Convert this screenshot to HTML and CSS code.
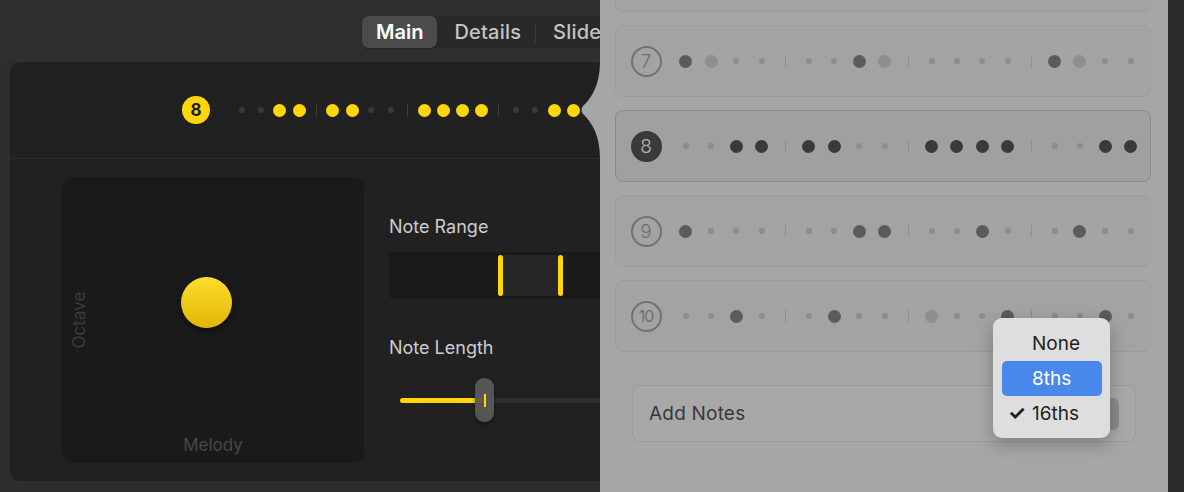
FILE: index.html
```html
<!DOCTYPE html>
<html lang="en">
<head>
    <meta charset="UTF-8">
    <title>Drummer - Main</title>
    <link rel="stylesheet" href="styles.css">
</head>
<body>

<div class="app">
    <!-- Abas do topo -->
    <div class="toolbar">
        <div class="segmented">
            <span class="seg active">Main</span>
            <span class="seg">Details</span>
            <span class="seg-sep"></span>
            <span class="seg">Slider</span>
        </div>
    </div>

    <div class="panel">
        <!-- Padrão selecionado -->
        <div class="pattern-head">
            <span class="badge">8</span>
            <div class="steps steps-head">
                <span class="st"></span><span class="st"></span><span class="st on"></span><span class="st on"></span>
                <span class="sep"></span>
                <span class="st on"></span><span class="st on"></span><span class="st"></span><span class="st"></span>
                <span class="sep"></span>
                <span class="st on"></span><span class="st on"></span><span class="st on"></span><span class="st on"></span>
                <span class="sep"></span>
                <span class="st"></span><span class="st"></span><span class="st on"></span><span class="st on"></span>
            </div>
        </div>

        <div class="panel-body">
            <!-- Pad XY -->
            <div class="xy-pad">
                <span class="axis-y">Octave</span>
                <span class="ball" style="left:119px; top:100px;"></span>
                <span class="axis-x">Melody</span>
            </div>

            <div class="controls">
                <div class="label">Note Range</div>
                <div class="range">
                    <span class="range-out" style="width:109px;"></span>
                    <span class="handle"></span>
                    <span class="range-in" style="width:55px;"></span>
                    <span class="handle"></span>
                    <span class="range-out grow"></span>
                </div>

                <div class="label label-gap">Note Length</div>
                <div class="slider">
                    <span class="fill" style="width:84px;"></span>
                    <span class="track"></span>
                    <span class="thumb" style="left:86px;"><i></i></span>
                </div>
            </div>
        </div>
    </div>
</div>

<!-- Popover com lista de padrões -->
<div class="popover">
    <svg class="arrow" width="20" height="96" viewBox="0 0 20 96">
        <path d="M20 0 C20 22 12 36 3 44 Q0 48 3 52 C12 60 20 74 20 96 Z" fill="#a6a6a6"/>
    </svg>

    <div class="cards">
        <div class="card"></div>

        <div class="card">
            <span class="num">7</span>
            <div class="steps">
                <span class="st on"></span><span class="st on soft"></span><span class="st"></span><span class="st"></span>
                <span class="sep"></span>
                <span class="st"></span><span class="st"></span><span class="st on"></span><span class="st on soft"></span>
                <span class="sep"></span>
                <span class="st"></span><span class="st"></span><span class="st"></span><span class="st"></span>
                <span class="sep"></span>
                <span class="st on"></span><span class="st on soft"></span><span class="st"></span><span class="st"></span>
            </div>
        </div>

        <div class="card current">
            <span class="num">8</span>
            <div class="steps">
                <span class="st"></span><span class="st"></span><span class="st on"></span><span class="st on"></span>
                <span class="sep"></span>
                <span class="st on"></span><span class="st on"></span><span class="st"></span><span class="st"></span>
                <span class="sep"></span>
                <span class="st on"></span><span class="st on"></span><span class="st on"></span><span class="st on"></span>
                <span class="sep"></span>
                <span class="st"></span><span class="st"></span><span class="st on"></span><span class="st on"></span>
            </div>
        </div>

        <div class="card">
            <span class="num">9</span>
            <div class="steps">
                <span class="st on"></span><span class="st"></span><span class="st"></span><span class="st"></span>
                <span class="sep"></span>
                <span class="st"></span><span class="st"></span><span class="st on"></span><span class="st on"></span>
                <span class="sep"></span>
                <span class="st"></span><span class="st"></span><span class="st on"></span><span class="st"></span>
                <span class="sep"></span>
                <span class="st"></span><span class="st on"></span><span class="st"></span><span class="st"></span>
            </div>
        </div>

        <div class="card">
            <span class="num small">10</span>
            <div class="steps">
                <span class="st"></span><span class="st"></span><span class="st on"></span><span class="st"></span>
                <span class="sep"></span>
                <span class="st"></span><span class="st on"></span><span class="st"></span><span class="st"></span>
                <span class="sep"></span>
                <span class="st on soft"></span><span class="st"></span><span class="st"></span><span class="st on"></span>
                <span class="sep"></span>
                <span class="st"></span><span class="st"></span><span class="st on"></span><span class="st"></span>
            </div>
        </div>
    </div>

    <div class="add-notes">
        <span>Add Notes</span>
        <span class="popup-btn"></span>
    </div>

    <!-- Menu aberto -->
    <div class="menu">
        <div class="menu-item">None</div>
        <div class="menu-item selected">8ths</div>
        <div class="menu-item"><span class="check">✓</span>16ths</div>
    </div>
</div>

<div class="edge"></div>

</body>
</html>
```

FILE: styles.css
```css
body {
    margin: 0;
    width: 1184px;
    height: 492px;
    overflow: hidden;
    position: relative;
    background-color: #2d2d2d;
    font-family: Inter, "Noto Sans", sans-serif;
}
.app {
    width: 1184px;
}
.toolbar {
    height: 62px;
    box-sizing: border-box;
    padding: 16px 0 0 362px;
    background-color: #2f2f2f;
}
.segmented {
    display: flex;
    align-items: center;
    width: max-content;
    height: 32px;
    background-color: #292929;
    border-radius: 8px;
}
.seg {
    height: 32px;
    line-height: 32px;
    padding: 0 14px 0 17px;
    font-size: 20px;
    letter-spacing: 0.2px;
    font-weight: 500;
    color: #c4c4c4;
    border-radius: 7px;
}
.seg.active {
    padding: 0 14px;
    background-color: #4b4b4b;
    color: #fff;
    font-weight: 600;
    letter-spacing: 0;
    box-shadow: 0 1px 2px rgba(0, 0, 0, 0.3);
}
.seg-sep {
    width: 1px;
    height: 19px;
    background-color: #3c3c3c;
}
.panel {
    margin-left: 10px;
    width: 1170px;
    height: 419px;
    background-color: #212121;
    border-radius: 10px;
}
.pattern-head {
    height: 96px;
    border-bottom: 1px solid #2b2b2b;
    display: flex;
    align-items: center;
    padding-left: 172px;
}
.badge {
    width: 28px;
    height: 28px;
    border-radius: 50%;
    background-color: #ffd60a;
    color: #1c1c1c;
    font-size: 17px;
    font-weight: 700;
    display: flex;
    align-items: center;
    justify-content: center;
}

/* fileira de passos */
.steps {
    display: flex;
    align-items: center;
    margin-left: 11.5px;
}
.st {
    width: 25.4px;
    height: 14px;
    display: flex;
    align-items: center;
    justify-content: center;
}
.st::before {
    content: "";
    width: 6px;
    height: 6px;
    border-radius: 50%;
    background-color: #8c8c8c;
}
.st.on::before {
    width: 13px;
    height: 13px;
    background-color: #5b5b5b;
}
.st.on.soft::before {
    background-color: #8f8f8f;
}
.current .st.on::before {
    background-color: #3a3a3a;
}
.sep {
    width: 21.4px;
    display: flex;
    justify-content: center;
}
.sep::before {
    content: "";
    width: 1px;
    height: 12px;
    background-color: #8e8e8e;
}
.steps-head {
    margin-left: 22px;
}
.steps-head .st {
    width: 19.2px;
}
.steps-head .st::before {
    background-color: #393939;
}
.steps-head .st.on::before {
    background-color: #ffd60a;
}
.steps-head .sep {
    width: 14.6px;
}
.steps-head .sep::before {
    background-color: #3d3d3d;
}

.panel-body {
    display: flex;
    gap: 25px;
    padding: 18px 0 0 52px;
}
.xy-pad {
    position: relative;
    width: 302px;
    height: 286px;
    background-color: #1a1a1a;
    border-radius: 12px;
}
.ball {
    position: absolute;
    width: 51px;
    height: 51px;
    border-radius: 50%;
    background: linear-gradient(#fcdc2c, #e1b708);
    box-shadow: 0 3px 6px rgba(0, 0, 0, 0.5);
}
.axis-y {
    position: absolute;
    left: -14px;
    top: 133px;
    width: 61px;
    text-align: center;
    transform: rotate(-90deg);
    font-size: 17px;
    line-height: 20px;
    color: #3c3c3c;
}
.axis-x {
    position: absolute;
    left: 0;
    right: 0;
    bottom: 8px;
    text-align: center;
    font-size: 17px;
    line-height: 20px;
    color: #484848;
}
.controls {
    width: 320px;
}
.label {
    margin-top: 39px;
    font-size: 18px;
    line-height: 22px;
    color: #cdcdcd;
}
.label-gap {
    margin-top: 38px;
}
.range {
    margin-top: 14px;
    height: 47px;
    display: flex;
    align-items: center;
    background-color: #1a1a1a;
    border-radius: 5px;
}
.range-out {
    height: 47px;
}
.range-out.grow {
    flex: 1;
}
.range-in {
    height: 41px;
    background-color: #262626;
}
.handle {
    width: 5px;
    height: 41px;
    border-radius: 3px;
    background-color: #ffd60a;
}
.slider {
    position: relative;
    margin-top: 19px;
    height: 44px;
    display: flex;
    align-items: center;
    padding-left: 11px;
}
.fill {
    height: 5px;
    border-radius: 3px 0 0 3px;
    background-color: #ffd60a;
}
.track {
    flex: 1;
    height: 5px;
    background-color: #2f2f2f;
}
.thumb {
    position: absolute;
    top: 0;
    width: 19px;
    height: 44px;
    border-radius: 9px;
    background-color: rgba(88, 88, 88, 0.95);
    box-shadow: 0 2px 4px rgba(0, 0, 0, 0.4);
    display: flex;
    align-items: center;
    justify-content: center;
}
.thumb i {
    width: 2px;
    height: 13px;
    background-color: #ffd60a;
}

/* popover */
.popover {
    position: absolute;
    left: 600px;
    top: 0;
    width: 568px;
    height: 492px;
    box-sizing: border-box;
    padding-left: 15px;
    background-color: #a6a6a6;
}
.arrow {
    position: absolute;
    left: -20px;
    top: 62px;
}
.cards {
    display: flex;
    flex-direction: column;
    gap: 13px;
    margin-top: -60px;
    width: 536px;
}
.card {
    height: 72px;
    box-sizing: border-box;
    display: flex;
    align-items: center;
    padding-left: 14.5px;
    background-color: #a3a3a3;
    border: 1px solid rgba(0, 0, 0, 0.04);
    border-radius: 8px;
}
.card.current {
    background-color: #a0a0a0;
    border-color: #8a8a8a;
}
.num {
    width: 31px;
    height: 31px;
    box-sizing: border-box;
    border: 2px solid #727272;
    border-radius: 50%;
    color: #6e6e6e;
    font-size: 19px;
    font-weight: 300;
    display: flex;
    align-items: center;
    justify-content: center;
}
.num.small {
    font-size: 16px;
    font-weight: 400;
    letter-spacing: -1px;
}
.current .num {
    background-color: #3a3a3a;
    border-color: #3a3a3a;
    color: #b2b2b2;
}
.add-notes {
    margin: 33px 0 0 17px;
    width: 504px;
    height: 57px;
    box-sizing: border-box;
    display: flex;
    align-items: center;
    justify-content: space-between;
    padding: 0 16px;
    background-color: #a8a8a8;
    border: 1px solid rgba(0, 0, 0, 0.07);
    border-radius: 8px;
    font-size: 19px;
    letter-spacing: 0.2px;
    color: #383838;
}
.popup-btn {
    width: 100px;
    height: 32px;
    border-radius: 6px;
    background-color: #8b8b8b;
}
.menu {
    position: absolute;
    left: 393px;
    top: 318px;
    width: 117px;
    height: 120px;
    box-sizing: border-box;
    padding: 8px 8px 0 9px;
    background-color: #dedede;
    border-radius: 9px;
    box-shadow: 0 6px 18px rgba(0, 0, 0, 0.25);
}
.menu-item {
    position: relative;
    height: 35px;
    line-height: 35px;
    padding-left: 30px;
    font-size: 19px;
    color: #1f1f1f;
    border-radius: 5px;
}
.menu-item.selected {
    background-color: #4a87ea;
    color: #fff;
}
.check {
    position: absolute;
    left: 6px;
    font-size: 20px;
    font-weight: 700;
}
.edge {
    position: absolute;
    right: 0;
    top: 0;
    width: 16px;
    height: 492px;
    background-color: #2b2b2b;
}
```
